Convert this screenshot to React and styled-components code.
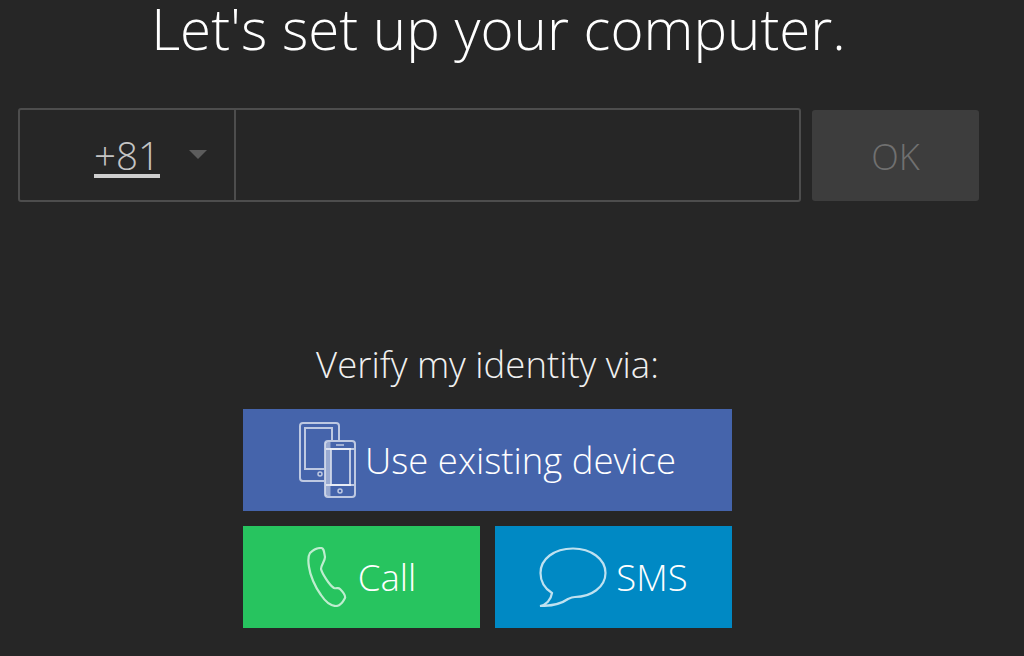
import React from 'react';
import styled, { createGlobalStyle } from 'styled-components';

const GlobalStyle = createGlobalStyle`
  html, body {
    margin: 0;
    height: 100%;
    background: #262626;
    overflow: hidden;
  }
  body {
    font-family: 'Open Sans', 'Liberation Sans', sans-serif;
    font-weight: 300;
    color: #fff;
  }
`;

const Page = styled.div`
  width: 961px;
  height: 656px;
  margin-left: 18px;
  display: flex;
  flex-direction: column;
  align-items: center;
`;

const Title = styled.h1`
  margin: 0;
  height: 108px;
  font-size: 56.5px;
  line-height: 58px;
  font-weight: 300;
  white-space: nowrap;
`;

const PhoneRow = styled.div`
  width: 100%;
  display: flex;
  align-items: center;
  gap: 11px;
`;

const PhoneField = styled.div`
  width: 783px;
  height: 94px;
  box-sizing: border-box;
  display: flex;
  border: 2px solid #4d4d4d;
  border-radius: 3px;
`;

const CountryCode = styled.div`
  width: 216px;
  flex: none;
  box-sizing: border-box;
  border-right: 2px solid #4d4d4d;
  display: flex;
  align-items: center;
  padding-left: 74px;
`;

const CodeText = styled.span`
  font-size: 38.5px;
  line-height: 38px;
  color: #c4c4c4;
  border-bottom: 4px solid #cfcfcf;
  width: 66px;
  margin-top: 3px;
`;

const Caret = styled.span`
  width: 0;
  height: 0;
  margin-left: 29px;
  margin-top: -2px;
  border-left: 9px solid transparent;
  border-right: 9px solid transparent;
  border-top: 9px solid #5c5c5c;
`;

const OkButton = styled.div`
  width: 167px;
  height: 91px;
  border-radius: 3px;
  background: #3d3d3d;
  color: #707070;
  font-size: 36px;
  padding-top: 2px;
  box-sizing: border-box;
  display: flex;
  align-items: center;
  justify-content: center;
`;

const VerifyBlock = styled.div`
  width: 489px;
  margin-top: 138px;
  margin-right: 22px;
  display: flex;
  flex-direction: column;
  align-items: center;
`;

const VerifyLabel = styled.div`
  height: 69px;
  font-size: 36.5px;
  line-height: 48px;
  color: #f0f0f0;
  white-space: nowrap;
`;

const ButtonGrid = styled.div`
  width: 100%;
  display: grid;
  grid-template-columns: 1fr 1fr;
  gap: 15px;
`;

const MethodButton = styled.div`
  grid-column: ${p => (p.$wide ? '1 / -1' : 'auto')};
  height: 102px;
  background: ${p => p.$color};
  display: flex;
  align-items: center;
  justify-content: center;
  gap: ${p => p.$gap}px;
  font-size: 36.5px;
  color: #fff;
  white-space: nowrap;
`;

const DevicesIcon = () => (
  <svg width="57" height="76" viewBox="0 0 57 76" fill="none" stroke="#fff" strokeOpacity="0.65" strokeWidth="2">
    <path d="M25 59H4a3 3 0 0 1-3-3V4a3 3 0 0 1 3-3h33a3 3 0 0 1 3 3v14" />
    <path d="M25 47H6V6h27v12" />
    <circle cx="21" cy="52" r="2" strokeWidth="1.5" />
    <rect x="26" y="19" width="30" height="56" rx="3" />
    <path d="M29 20v54" strokeWidth="5" strokeOpacity="0.45" />
    <rect x="32" y="27" width="19" height="36" />
    <path d="M27 27h28M27 63h28" />
    <path d="M37 23h8" strokeWidth="1.5" />
    <circle cx="41" cy="69" r="2" strokeWidth="1.5" />
  </svg>
);

const PhoneIcon = () => (
  <svg width="40" height="60" viewBox="0 0 40 60" fill="none" stroke="#fff" strokeOpacity="0.7" strokeWidth="2.2">
    <path d="M3 6C6 3 10 1 14 1c3 0 3 4 4 9 0 4-4 8-4 12 1 4 8 16 13 19 3 1 4-1 6 1 3 3 6 6 5 9-2 4-5 8-9 8-5 0-11-5-15-11C8 40 3 28 2 20 1 14 1 9 3 6z" />
  </svg>
);

const BubbleIcon = () => (
  <svg width="68" height="60" viewBox="0 0 68 60" fill="none" stroke="#fff" strokeOpacity="0.75" strokeWidth="2.2">
    <path d="M13 46C5 41 1.5 34 1.5 26 1.5 12 15 1.5 34 1.5c18 0 32.500 10.500 32.500 24.500S52 50 36 50c-3 0-5 1-7 2-7 5-18 7-28 7 6-1 11-6 12-13z" />
  </svg>
);

export default function App() {
  return (
    <Page>
      <GlobalStyle />
      <Title>Let's set up your computer.</Title>
      <PhoneRow>
        <PhoneField>
          <CountryCode>
            <CodeText>+81</CodeText>
            <Caret />
          </CountryCode>
        </PhoneField>
        <OkButton>OK</OkButton>
      </PhoneRow>
      <VerifyBlock>
        <VerifyLabel>Verify my identity via:</VerifyLabel>
        <ButtonGrid>
          <MethodButton $wide $color="#4564ab" $gap={9}>
            <DevicesIcon />
            Use existing device
          </MethodButton>
          <MethodButton $color="#27c45f" $gap={11}>
            <PhoneIcon />
            Call
          </MethodButton>
          <MethodButton $color="#0089c4" $gap={9}>
            <BubbleIcon />
            SMS
          </MethodButton>
        </ButtonGrid>
      </VerifyBlock>
    </Page>
  );
}
